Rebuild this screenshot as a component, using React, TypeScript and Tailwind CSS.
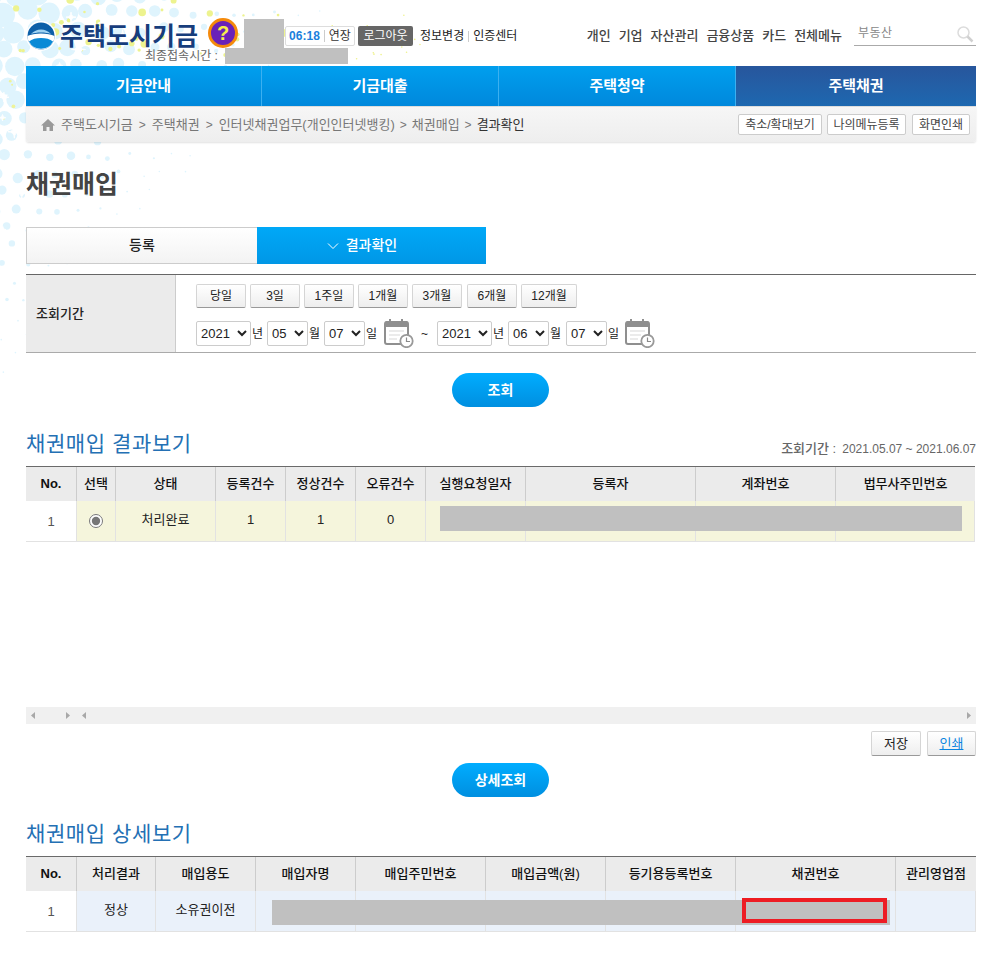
import React from "react";

function Dots() {
  const items: React.ReactNode[] = [];
  let s = 98765;
  const r = () => {
    s = (s * 1664525 + 1013904223) % 4294967296;
    return s / 4294967296;
  };
  const step = 21;
  let row = 0;
  for (let gy = -6; gy < 400; gy += step * 0.86, row++) {
    for (let gx = row % 2 ? step / 2 - 6 : -6; gx < 440; gx += step) {
      const x = gx + (r() - 0.5) * 7;
      const y = gy + (r() - 0.5) * 7;
      const d = Math.max(0, x) / 340 + Math.max(0, y) / 380;
      if (d > 1) continue;
      const rad = Math.max(0.8, 14 * Math.pow(1 - d, 1.25) * (0.6 + r() * 0.45));
      items.push(<circle key={gx + "-" + gy} cx={x} cy={y} r={rad} fill="#dff4fd" />);
    }
  }
  for (let i = 0; i < 40; i++) {
    const x = 10 + r() * 285;
    const y = r() * 60;
    items.push(<circle key={"y" + i} cx={x} cy={y} r={1 + r() * 3} fill="#edf38f" />);
  }
  for (let i = 0; i < 12; i++) {
    const x = r() * 110;
    const y = 60 + r() * 70;
    items.push(<circle key={"z" + i} cx={x} cy={y} r={0.8 + r() * 1.4} fill="#eef39a" />);
  }
  for (let i = 0; i < 14; i++) {
    const x = 290 + r() * 130;
    const y = r() * 62;
    items.push(<circle key={"q" + i} cx={x} cy={y} r={0.8} fill="#eef28c" />);
  }
  for (let i = 0; i < 26; i++) {
    const x = r() * 130;
    const y = 10 + r() * 240;
    const a = 3 + r() * 4;
    items.push(
      <path
        key={"w" + i}
        d={`M${x} ${y - a}Q${x} ${y} ${x + a} ${y}Q${x} ${y} ${x} ${y + a}Q${x} ${y} ${x - a} ${y}Q${x} ${y} ${x} ${y - a}Z`}
        fill="#ffffff"
        stroke="#ffffff"
        strokeWidth="1"
      />
    );
  }
  return (
    <svg className="absolute left-0 top-0 -z-10" width="440" height="420" viewBox="0 0 440 420">
      {items}
    </svg>
  );
}

function Logo() {
  return (
    <svg width="30" height="30" viewBox="0 0 30 30" className="shrink-0">
      <circle cx="15" cy="15" r="15" fill="#ffffff" />
      <circle cx="15" cy="15" r="13.5" fill="#0c5fa8" />
      <path d="M1.5 15a13.5 13.5 0 0 0 27 0c-3-1.8-8-2.6-13.5-2.6S4.500 13.200 1.500 15z" fill="#ffffff" />
      <path d="M3 20.500a13.500 13.500 0 0 0 24 0c-3-2.500-7-3.500-12-3.500s-9 1-12 3.500z" fill="#0a8ad6" />
      <path d="M5 13c3-3 6-4.500 10-4.500s7 1.500 10 4.500c-3-1-6-1.500-10-1.500S8 12 5 13z" fill="#9fd3f2" />
    </svg>
  );
}

function Calendar() {
  return (
    <svg width="30" height="29" viewBox="0 0 30 29" className="shrink-0">
      <rect x="1" y="3" width="23" height="22" rx="2" fill="#ffffff" stroke="#8f8f8f" strokeWidth="2" />
      <path d="M1 4a2 2 0 0 1 2-2h19a2 2 0 0 1 2 2v4H1z" fill="#8f8f8f" />
      <path d="M6 0v5M18 0v5" stroke="#8f8f8f" strokeWidth="2" />
      <path d="M5 12h15M5 16h11M5 20h8" stroke="#d8d8d8" strokeWidth="1.200" />
      <circle cx="22.500" cy="22" r="6.200" fill="#ffffff" stroke="#999999" strokeWidth="1.800" />
      <path d="M22.500 18.500V22.500H26" fill="none" stroke="#8a8a8a" strokeWidth="1.200" />
    </svg>
  );
}

function Sel({ v, opts, w }: { v: string; opts: string[]; w: string }) {
  return (
    <select
      defaultValue={v}
      className={`${w} h-[25px] rounded-[2px] border border-[#cccccc] bg-white text-[13px] text-[#222222]`}
    >
      {opts.map((o) => (
        <option key={o}>{o}</option>
      ))}
    </select>
  );
}

function QuickBtn({ t, w }: { t: string; w: string }) {
  return (
    <button
      className={`${w} h-[24px] rounded-[2px] border border-[#d5d5d5] border-b-[#999999] bg-gradient-to-b from-white to-[#eeeeee] text-[12px] text-[#222222]`}
    >
      {t}
    </button>
  );
}

function Pill({ t }: { t: string }) {
  return (
    <div className="flex w-[949px] justify-center">
      <button className="h-[34px] w-[97px] rounded-full bg-gradient-to-b from-[#00adff] to-[#008fe0] text-[14px] font-bold text-white">
        {t}
      </button>
    </div>
  );
}

function Arrow({ dir }: { dir: "l" | "r" }) {
  return (
    <svg width="4" height="7" viewBox="0 0 4 7" className="shrink-0">
      <path d={dir === "l" ? "M4 0V7L0 3.500Z" : "M0 0V7L4 3.500Z"} fill="#a8a8a8" />
    </svg>
  );
}

function HeadCell({ t, bold }: { t: string; bold?: boolean }) {
  return (
    <div
      className={`flex items-center justify-center border-r border-[#cccccc] last:border-r-0 text-[13px] text-[#111111] ${
        bold ? "font-bold" : "font-medium"
      }`}
    >
      {t}
    </div>
  );
}

function BodyCell({ children, first, bg }: { children?: React.ReactNode; first?: boolean; bg: string }) {
  return (
    <div
      className={`flex items-center justify-center border-r border-[#e2e2e2] last:border-r-0 text-[13px] ${
        first ? "bg-white pt-[2px] text-[#555555]" : `${bg} pb-[3px] text-[#222222]`
      }`}
    >
      {children}
    </div>
  );
}

const cols1 = "grid-cols-[51px_39px_100px_70px_70px_70px_100px_170px_140px_139px]";
const cols2 = "grid-cols-[51px_79px_100px_100px_130px_120px_130px_160px_80px]";

export default function App() {
  const font = { fontFamily: '"Liberation Sans", "Noto Sans CJK KR", sans-serif' };
  const years = ["2021", "2020"];
  const months = ["05", "06", "07"];
  return (
    <div className="relative z-0 h-[962px] w-[994px] overflow-hidden bg-white pl-[26px] pr-[18px]" style={font}>
      <Dots />

      {/* top bar */}
      <div className="flex h-[66px] justify-between">
        <div className="flex flex-col">
          <div className="flex h-[48px] items-start pt-[19px]">
            <div className="mt-[2px] flex items-center gap-[4px]">
              <Logo />
              <span className="text-[25px] font-bold leading-[30px] text-[#173d7c]">주택도시기금</span>
            </div>
            <div className="ml-[10px] -mt-px flex h-[30px] w-[30px] items-center justify-center rounded-full border-[3px] border-[#f58a0b] bg-[#6a22b8] text-[20px] font-bold leading-none text-[#f5f04a]">
              ?
            </div>
            <div className="ml-[6px] h-[29px] w-[40px] bg-[#c0c0c0]" />
            <div className="ml-px mt-[7px] flex h-[20px] w-[70px] items-center justify-center rounded-[2px] border border-[#dddddd] bg-white text-[12px]">
              <span className="font-bold text-[#1b80dc]">06:18</span>
              <span className="mx-[4px] h-[12px] w-px bg-[#cccccc]" />
              <span className="text-[#333333]">연장</span>
            </div>
            <div className="ml-[3px] mt-[7px] flex h-[20px] w-[55px] items-center justify-center rounded-[2px] bg-[#666666] text-[12px] text-white">
              로그아웃
            </div>
            <div className="ml-[7px] mt-[7px] flex h-[20px] items-center text-[12px] text-[#222222]">
              <span>정보변경</span>
              <span className="mx-[4px] h-[11px] w-px bg-[#cccccc]" />
              <span>인증센터</span>
            </div>
          </div>
          <div className="ml-[119px] flex h-[16px] items-center">
            <span className="w-[80px] text-[12px] text-[#666666]">최종접속시간 :</span>
            <div className="h-[16px] w-[123px] bg-[#c0c0c0]" />
          </div>
        </div>
        <div className="flex items-start pt-[26px]">
          <div className="flex h-[20px] items-center gap-[8px] text-[13px] font-medium text-[#444444]">
            <span>개인</span>
            <span>기업</span>
            <span>자산관리</span>
            <span>금융상품</span>
            <span>카드</span>
            <span>전체메뉴</span>
          </div>
          <div className="ml-[12px] -mt-[6px] flex h-[26px] w-[122px] items-center justify-between border-b border-[#aaaaaa] pl-[4px] pr-[2px]">
            <span className="text-[12px] tracking-[0.5px] text-[#888888]">부동산</span>
            <svg width="18" height="18" viewBox="0 0 18 18" className="mt-[2px]">
              <circle cx="7.500" cy="7.500" r="5.500" fill="none" stroke="#dcdcdc" strokeWidth="1.500" />
              <path d="M11.500 11.500L16.500 16.500" stroke="#d0d0d0" strokeWidth="2.500" />
            </svg>
          </div>
        </div>
      </div>

      {/* main nav */}
      <div className="flex h-[40px] w-[950px] text-[15px] font-bold text-white">
        <div className="flex w-[236px] items-center justify-center border-r border-[#3cb0f0] bg-gradient-to-b from-[#009fee] to-[#0088dc]">기금안내</div>
        <div className="flex w-[237px] items-center justify-center border-r border-[#3cb0f0] bg-gradient-to-b from-[#009fee] to-[#0088dc]">기금대출</div>
        <div className="flex w-[237px] items-center justify-center border-r border-[#3cb0f0] bg-gradient-to-b from-[#009fee] to-[#0088dc]">주택청약</div>
        <div className="flex w-[240px] items-center justify-center bg-gradient-to-b from-[#27569c] to-[#1d68b0]">주택채권</div>
      </div>

      {/* breadcrumb */}
      <div className="flex h-[36px] w-[950px] items-center justify-between rounded-b-[3px] border-t border-[#dddddd] bg-gradient-to-b from-[#f6f6f6] to-[#eeeeee] pl-[15px] pr-[6px] shadow-[0_1px_2px_rgba(0,0,0,0.12)]">
        <div className="flex items-center text-[13px] text-[#777777]">
          <svg width="14" height="12" viewBox="0 0 14 12" className="mr-[6px]">
            <path d="M7 0L14 6.500H12V12H8.500V8H5.500V12H2V6.500H0Z" fill="#999999" />
          </svg>
          <span>주택도시기금</span>
          <span className="mx-[6px] text-[12px]">&gt;</span>
          <span>주택채권</span>
          <span className="mx-[6px] text-[12px]">&gt;</span>
          <span>인터넷채권업무(개인인터넷뱅킹)</span>
          <span className="mx-[5px] text-[12px]">&gt;</span>
          <span>채권매입</span>
          <span className="mx-[5px] text-[12px]">&gt;</span>
          <span className="text-[#333333]">결과확인</span>
        </div>
        <div className="flex text-[12px] text-[#444444]">
          <div className="flex h-[21px] w-[84px] items-center justify-center rounded-[2px] border border-[#cccccc] bg-white">축소/확대보기</div>
          <div className="ml-[5px] flex h-[21px] w-[79px] items-center justify-center rounded-[2px] border border-[#cccccc] bg-white">나의메뉴등록</div>
          <div className="ml-[6px] flex h-[21px] w-[58px] items-center justify-center rounded-[2px] border border-[#cccccc] bg-white">화면인쇄</div>
        </div>
      </div>

      {/* page title */}
      <h1 className="mt-[24px] h-[37px] text-[25px] font-bold leading-[36px] text-[#444444]">채권매입</h1>

      {/* tabs */}
      <div className="mt-[24px] flex h-[37px] w-[460px] text-[14px] font-medium">
        <div className="flex w-[231px] items-center justify-center border border-r-0 border-[#cccccc] bg-gradient-to-b from-white to-[#f3f3f3] text-[#222222]">
          등록
        </div>
        <div className="flex w-[229px] items-center justify-center gap-[7px] bg-gradient-to-b from-[#00a8f7] to-[#0097e6] pr-[19px] text-white">
          <svg width="12" height="8" viewBox="0 0 12 8">
            <path d="M1 1.500L6 6.500L11 1.500" fill="none" stroke="#ffffff" strokeWidth="1" />
          </svg>
          결과확인
        </div>
      </div>

      {/* search form */}
      <div className="mt-[10px] flex h-[79px] w-[950px] border-t border-b border-t-[#666666] border-b-[#aaaaaa]">
        <div className="flex w-[150px] items-center border-r border-[#cccccc] bg-[#ebebeb] pl-[10px] text-[13px] font-medium text-[#222222]">
          조회기간
        </div>
        <div className="flex flex-col gap-[11px] pl-[20px] pt-[9px]">
          <div className="flex gap-[4px]">
            <QuickBtn t="당일" w="w-[50px]" />
            <QuickBtn t="3일" w="w-[50px]" />
            <QuickBtn t="1주일" w="w-[50px]" />
            <QuickBtn t="1개월" w="w-[50px]" />
            <QuickBtn t="3개월" w="mr-px w-[50px]" />
            <QuickBtn t="6개월" w="w-[50px]" />
            <QuickBtn t="12개월" w="w-[56px]" />
          </div>
          <div className="flex items-center text-[12px] text-[#222222]">
            <Sel v="2021" opts={years} w="w-[55px]" />
            <span className="ml-[1px] w-[15px]">년</span>
            <Sel v="05" opts={months} w="w-[41px]" />
            <span className="ml-[1px] w-[15px]">월</span>
            <Sel v="07" opts={months} w="w-[41px]" />
            <span className="ml-[1px] w-[18px]">일</span>
            <Calendar />
            <span className="ml-[7px] w-[16px]">~</span>
            <Sel v="2021" opts={years} w="w-[55px]" />
            <span className="ml-[1px] w-[15px]">년</span>
            <Sel v="06" opts={months} w="w-[41px]" />
            <span className="ml-[1px] w-[16px]">월</span>
            <Sel v="07" opts={months} w="w-[41px]" />
            <span className="ml-[1px] w-[17px]">일</span>
            <Calendar />
          </div>
        </div>
      </div>

      <div className="mt-[20px]">
        <Pill t="조회" />
      </div>

      {/* results */}
      <div className="mt-[23px] flex h-[36px] w-[950px] items-start justify-between">
        <h2 className="text-[21px] font-normal leading-[28px] tracking-[0.6px] text-[#2470b4]">채권매입 결과보기</h2>
        <div className="mt-[11px] flex items-center text-[12px] leading-[16px] text-[#666666]">
          <span className="mr-[6px] text-[13px] font-medium">조회기간 :</span>
          <span>2021.05.07 ~ 2021.06.07</span>
        </div>
      </div>

      <div className="w-[949px] border-t border-[#6a6a6a]">
        <div className={`grid h-[34px] ${cols1} bg-[#ebebeb]`}>
          <HeadCell t="No." bold />
          <HeadCell t="선택" />
          <HeadCell t="상태" />
          <HeadCell t="등록건수" />
          <HeadCell t="정상건수" />
          <HeadCell t="오류건수" />
          <HeadCell t="실행요청일자" />
          <HeadCell t="등록자" />
          <HeadCell t="계좌번호" />
          <HeadCell t="법무사주민번호" />
        </div>
        <div className={`relative grid h-[41px] ${cols1} border-b border-[#e2e2e2]`}>
          <BodyCell first bg="">1</BodyCell>
          <BodyCell bg="bg-[#f5f5dc]">
            <input type="radio" checked onChange={() => {}} className="mt-[3px] h-[14px] w-[14px] accent-[#777777]" />
          </BodyCell>
          <BodyCell bg="bg-[#f5f5dc]">처리완료</BodyCell>
          <BodyCell bg="bg-[#f5f5dc]">1</BodyCell>
          <BodyCell bg="bg-[#f5f5dc]">1</BodyCell>
          <BodyCell bg="bg-[#f5f5dc]">0</BodyCell>
          <BodyCell bg="bg-[#f5f5dc]" />
          <BodyCell bg="bg-[#f5f5dc]" />
          <BodyCell bg="bg-[#f5f5dc]" />
          <BodyCell bg="bg-[#f5f5dc]" />
          <div className="absolute left-[414px] top-[5px] h-[25px] w-[522px] bg-[#c0c0c0]" />
        </div>
      </div>

      {/* scrollbar */}
      <div className="mt-[165px] flex h-[17px] w-[950px] items-center bg-[#f0f0f0] px-[5px]">
        <Arrow dir="l" />
        <span className="ml-[31px]"><Arrow dir="r" /></span>
        <span className="ml-[12px]"><Arrow dir="l" /></span>
        <span className="ml-auto"><Arrow dir="r" /></span>
      </div>

      <div className="mt-[7px] flex w-[950px] justify-end gap-[6px] text-[13px]">
        <button className="h-[25px] w-[50px] rounded-[2px] border border-[#d5d5d5] border-b-[#999999] bg-gradient-to-b from-white to-[#eeeeee] text-[#222222]">저장</button>
        <button className="h-[25px] w-[49px] rounded-[2px] border border-[#d5d5d5] border-b-[#999999] bg-gradient-to-b from-white to-[#eeeeee] text-[#0a84e0] underline">인쇄</button>
      </div>

      <div className="mt-[7px]">
        <Pill t="상세조회" />
      </div>

      {/* details */}
      <h2 className="mt-[23px] h-[36px] text-[21px] font-normal leading-[28px] tracking-[0.6px] text-[#2470b4]">채권매입 상세보기</h2>

      <div className="w-[950px] border-t border-[#6a6a6a]">
        <div className={`grid h-[34px] ${cols2} bg-[#ebebeb]`}>
          <HeadCell t="No." bold />
          <HeadCell t="처리결과" />
          <HeadCell t="매입용도" />
          <HeadCell t="매입자명" />
          <HeadCell t="매입주민번호" />
          <HeadCell t="매입금액(원)" />
          <HeadCell t="등기용등록번호" />
          <HeadCell t="채권번호" />
          <HeadCell t="관리영업점" />
        </div>
        <div className={`relative grid h-[41px] ${cols2} border-b border-[#e2e2e2]`}>
          <BodyCell first bg="">1</BodyCell>
          <BodyCell bg="bg-[#eaf1fa]">정상</BodyCell>
          <BodyCell bg="bg-[#eaf1fa]">소유권이전</BodyCell>
          <BodyCell bg="bg-[#eaf1fa]" />
          <BodyCell bg="bg-[#eaf1fa]" />
          <BodyCell bg="bg-[#eaf1fa]" />
          <BodyCell bg="bg-[#eaf1fa]" />
          <BodyCell bg="bg-[#eaf1fa]" />
          <BodyCell bg="bg-[#eaf1fa]" />
          <div className="absolute left-[246px] top-[9px] h-[25px] w-[618px] bg-[#c0c0c0]" />
          <div className="absolute left-[716px] top-[7px] h-[25px] w-[145px] border-[4px] border-[#ed1c24]" />
        </div>
      </div>
    </div>
  );
}
